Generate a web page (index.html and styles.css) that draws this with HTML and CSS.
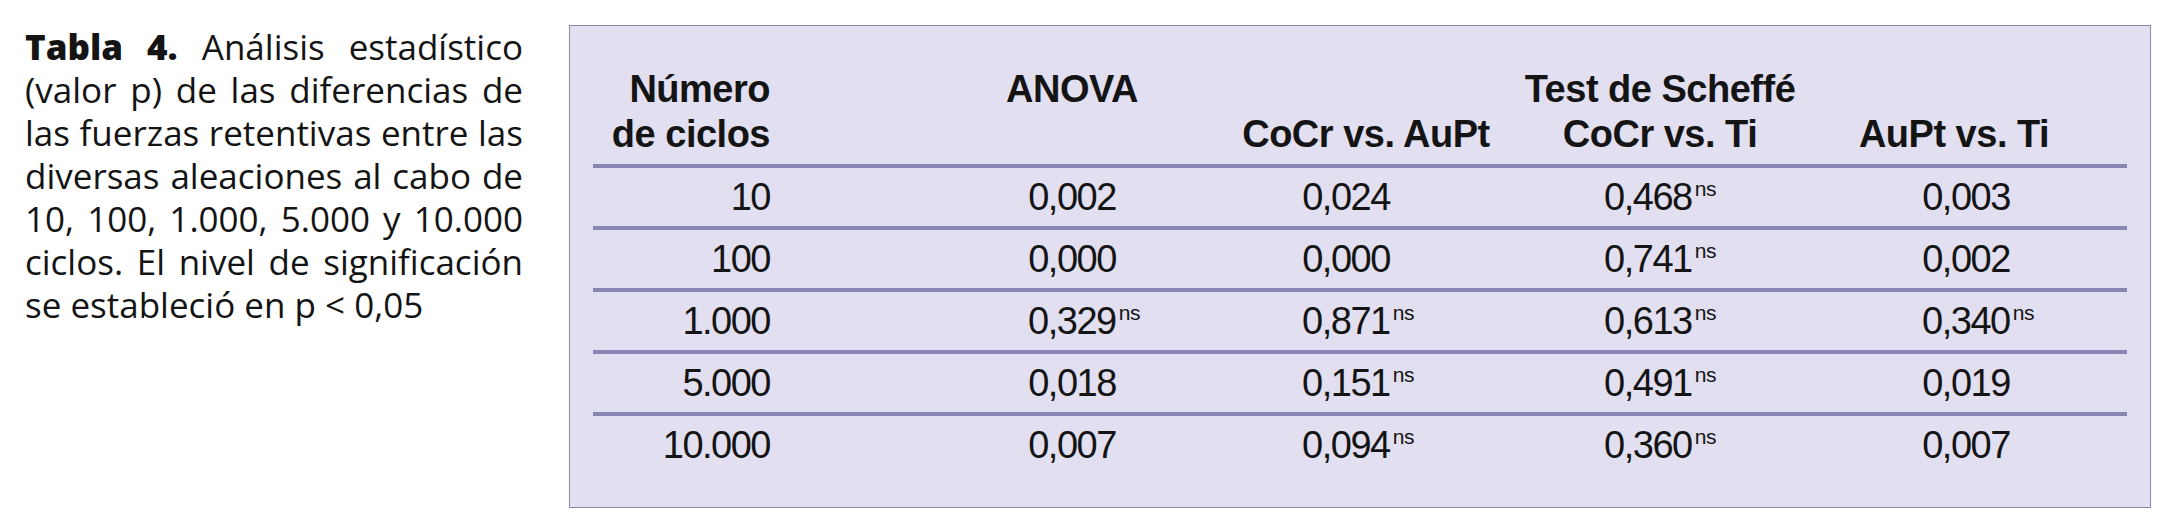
FILE: index.html
```html
<!DOCTYPE html>
<html lang="es">
<head>
<meta charset="utf-8">
<title>Tabla 4</title>
<link rel="stylesheet" href="styles.css">
</head>
<body>
<div class="page">
  <p class="caption">
    <span class="line"><b>Tabla 4.</b> Análisis estadístico</span>
    <span class="line">(valor p) de las diferencias de</span>
    <span class="line">las fuerzas retentivas entre las</span>
    <span class="line">diversas aleaciones al cabo de</span>
    <span class="line">10, 100, 1.000, 5.000 y 10.000</span>
    <span class="line">ciclos. El nivel de significación</span>
    <span class="line last">se estableció en p &lt; 0,05</span>
  </p>
  <div class="box">
    <div class="head">
      <div class="h-cycles">Número<br>de ciclos</div>
      <div class="h-anova">ANOVA</div>
      <div class="h-test">Test de Scheffé</div>
      <div class="h-c3">CoCr vs. AuPt</div>
      <div class="h-c4">CoCr vs. Ti</div>
      <div class="h-c5">AuPt vs. Ti</div>
    </div>
    <div class="row">
      <span class="cyc">10</span>
      <span class="v c2">0,002</span>
      <span class="v c3">0,024</span>
      <span class="v c4">0,468<sup class="ns">ns</sup></span>
      <span class="v c5">0,003</span>
    </div>
    <div class="row">
      <span class="cyc">100</span>
      <span class="v c2">0,000</span>
      <span class="v c3">0,000</span>
      <span class="v c4">0,741<sup class="ns">ns</sup></span>
      <span class="v c5">0,002</span>
    </div>
    <div class="row">
      <span class="cyc">1.000</span>
      <span class="v c2">0,329<sup class="ns">ns</sup></span>
      <span class="v c3">0,871<sup class="ns">ns</sup></span>
      <span class="v c4">0,613<sup class="ns">ns</sup></span>
      <span class="v c5">0,340<sup class="ns">ns</sup></span>
    </div>
    <div class="row">
      <span class="cyc">5.000</span>
      <span class="v c2">0,018</span>
      <span class="v c3">0,151<sup class="ns">ns</sup></span>
      <span class="v c4">0,491<sup class="ns">ns</sup></span>
      <span class="v c5">0,019</span>
    </div>
    <div class="row">
      <span class="cyc">10.000</span>
      <span class="v c2">0,007</span>
      <span class="v c3">0,094<sup class="ns">ns</sup></span>
      <span class="v c4">0,360<sup class="ns">ns</sup></span>
      <span class="v c5">0,007</span>
    </div>
  </div>
</div>
</body>
</html>
```

FILE: styles.css
```css
html, body {
  margin: 0;
  padding: 0;
  background: #ffffff;
}

body {
  width: 2170px;
  height: 529px;
  overflow: hidden;
  color: #141414;
  font-family: "Liberation Sans", Arial, sans-serif;
}

.page {
  display: flex;
  align-items: flex-start;
}

.caption {
  margin: 25px 0 0 25px;
  width: 498px;
  font-family: "Open Sans", "Liberation Sans", sans-serif;
  font-size: 35px;
  line-height: 43px;
}

.caption b {
  font-weight: 800;
}

.caption .line {
  display: block;
  text-align: justify;
  text-align-last: justify;
}

.caption .line.last {
  text-align-last: left;
}

.box {
  box-sizing: border-box;
  margin: 25px 0 0 46px;
  width: 1582px;
  height: 483px;
  border: 1px solid #8c89ad;
  background: #e1dff0;
  padding: 41px 23px 0 23px;
}

.head,
.row {
  display: grid;
  grid-template-columns: 332px repeat(4, 294px);
}

.head {
  grid-template-rows: 45px 45px;
  font-size: 38px;
  font-weight: 700;
  line-height: 45px;
  letter-spacing: -0.5px;
  margin-bottom: 7px;
}

.h-cycles {
  grid-column: 1;
  grid-row: 1 / span 2;
  text-align: right;
  padding-right: 155px;
}

.h-anova {
  grid-column: 2;
  grid-row: 1;
  text-align: center;
}

.h-test {
  grid-column: 4;
  grid-row: 1;
  text-align: center;
  white-space: nowrap;
}

.h-c3 {
  grid-column: 3;
  grid-row: 2;
  text-align: center;
  white-space: nowrap;
}

.h-c4 {
  grid-column: 4;
  grid-row: 2;
  text-align: center;
}

.h-c5 {
  grid-column: 5;
  grid-row: 2;
  text-align: center;
}

.row {
  border-top: 4px solid #8885b7;
  height: 58px;
  font-size: 38px;
  line-height: 58px;
  letter-spacing: -1.5px;
}

.cyc {
  text-align: right;
  padding-right: 155px;
}

.v {
  text-align: center;
  white-space: nowrap;
}

.c3 {
  padding-right: 40px;
}

.c4 {
  padding-right: 24px;
}

.c5 {
  padding-left: 24px;
}

.ns {
  font-size: 21px;
  line-height: 0;
  letter-spacing: -0.5px;
  vertical-align: 14px;
  margin-left: 3px;
  margin-right: -24px;
}
```
